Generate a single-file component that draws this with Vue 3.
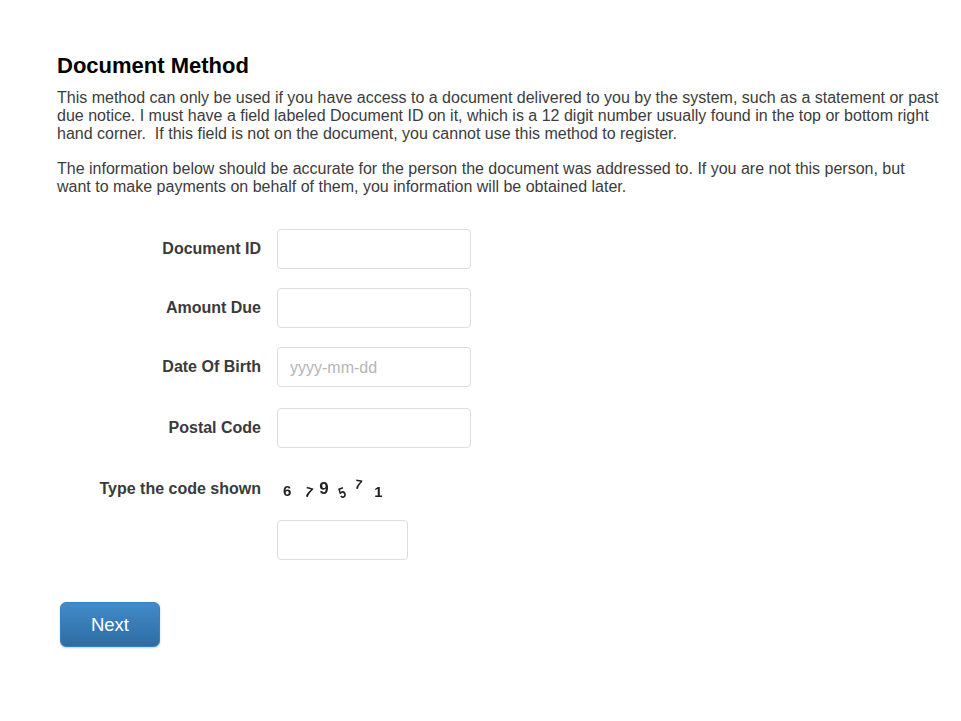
<script setup>
const fields = [
  { label: 'Document ID', placeholder: '', cls: 'r1' },
  { label: 'Amount Due', placeholder: '', cls: 'r2' },
  { label: 'Date Of Birth', placeholder: 'yyyy-mm-dd', cls: 'r3' },
  { label: 'Postal Code', placeholder: '', cls: 'r4' },
]
const digits = [
  { c: '6', cls: 'd1' },
  { c: '7', cls: 'd2' },
  { c: '9', cls: 'd3' },
  { c: '5', cls: 'd4' },
  { c: '7', cls: 'd5' },
  { c: '1', cls: 'd6' },
]
</script>

<template>
  <main class="page">
    <h1>Document Method</h1>
    <p>This method can only be used if you have access to a document delivered to you by the system, such as a statement or past due notice. I must have a field labeled Document ID on it, which is a 12 digit number usually found in the top or bottom right hand corner.&nbsp; If this field is not on the document, you cannot use this method to register.</p>
    <p>The information below should be accurate for the person the document was addressed to. If you are not this person, but want to make payments on behalf of them, you information will be obtained later.</p>
    <form class="form" @submit.prevent>
      <div v-for="f in fields" :key="f.label" class="row" :class="f.cls">
        <label class="label">{{ f.label }}</label>
        <input class="input" type="text" :placeholder="f.placeholder" />
      </div>
      <div class="row captcha-row">
        <label class="label">Type the code shown</label>
        <div class="captcha-box">
          <div class="captcha">
            <span v-for="(d, i) in digits" :key="i" class="digit" :class="d.cls">{{ d.c }}</span>
          </div>
          <input class="input short" type="text" />
        </div>
      </div>
      <button class="next" type="submit">Next</button>
    </form>
  </main>
</template>

<style scoped>
.page {
  box-sizing: border-box;
  width: 961px;
  height: 721px;
  padding: 53px 20px 0 57px;
  font-family: "Liberation Sans", Arial, sans-serif;
  color: #3c3c3c;
  background: #fff;
  overflow: hidden;
}
h1 {
  margin: 0 0 10px;
  font-size: 22px;
  line-height: 26px;
  font-weight: 700;
  color: #000;
}
p {
  margin: 0 0 17px;
  font-size: 16px;
  line-height: 18px;
}
.form {
  display: flex;
  flex-direction: column;
  margin-top: 33px;
}
.row {
  display: flex;
  align-items: center;
  height: 40px;
  gap: 16px;
}
.r1, .r2 { margin-bottom: 19px; }
.r3 { margin-bottom: 21px; }
.r4 { margin-bottom: 21px; }
.label {
  width: 204px;
  flex: none;
  text-align: right;
  font-size: 16px;
  font-weight: 700;
  color: #3a3a3a;
}
.input {
  box-sizing: border-box;
  width: 194px;
  height: 40px;
  padding: 1px 12px 0;
  border: 1px solid #ddd;
  border-radius: 4px;
  background: #fff;
  font: 16px "Liberation Sans", Arial, sans-serif;
  color: #333;
  outline: none;
}
.input::placeholder {
  color: #b5b5b5;
  opacity: 1;
}
.short { width: 131px; }
.captcha-row {
  height: auto;
  align-items: flex-start;
}
.captcha-row .label {
  line-height: 20px;
  padding-top: 10px;
}
.captcha-box {
  display: flex;
  flex-direction: column;
  gap: 9px;
}
.captcha {
  display: flex;
  align-items: flex-start;
  height: 42px;
  width: 131px;
  overflow: hidden;
  font-weight: 700;
  color: #222;
  filter: blur(0.35px);
}
.digit {
  display: block;
  flex: none;
  line-height: 16px;
}
.d1 { font-size: 15px; margin: 14px 0 0 6px; }
.d2 { font-size: 14px; margin: 15px 0 0 14px; transform: rotate(14deg); }
.d3 { font-size: 17px; margin: 12px 0 0 6px; }
.d4 { font-size: 15px; margin: 16px 0 0 9px; transform: rotate(-20deg) scaleX(0.8); }
.d5 { font-size: 13px; margin: 8px 0 0 9px; transform: rotate(10deg); }
.d6 { font-size: 15px; margin: 15px 0 0 12px; }
.next {
  box-sizing: border-box;
  width: 100px;
  height: 45px;
  margin: 42px 0 0 3px;
  padding: 1px 0 0;
  border: 1px solid #3a80bd;
  border-radius: 6px;
  background: linear-gradient(to bottom, #428bca, #2d6ca2);
  box-shadow: 0 1px 2px rgba(120, 170, 210, 0.5);
  color: #fff;
  font: 18.5px "Liberation Sans", Arial, sans-serif;
}
</style>
